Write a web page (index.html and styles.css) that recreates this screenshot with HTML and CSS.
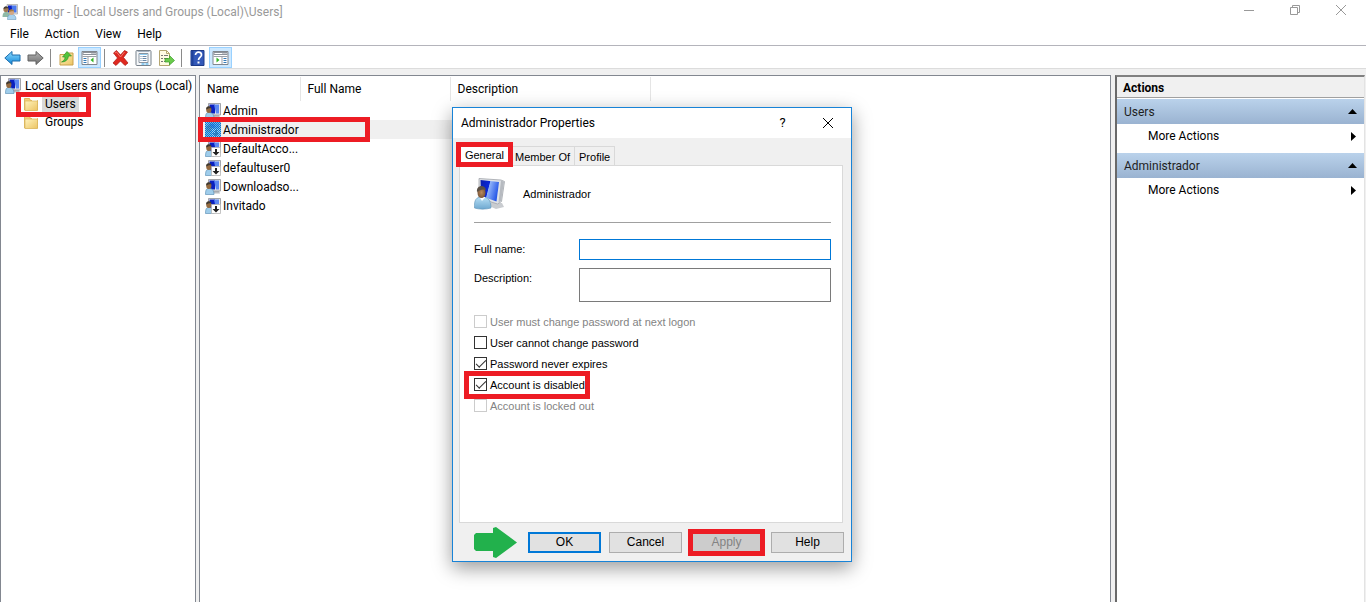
FILE: index.html
```html
<!DOCTYPE html>
<html lang="en">
<head>
<meta charset="utf-8">
<title>lusrmgr</title>
<link rel="stylesheet" href="styles.css">
</head>
<body>
<svg class="defs" aria-hidden="true">
  <defs>
    <linearGradient id="screen" x1="0" y1="0" x2="1" y2="0.3">
      <stop offset="0" stop-color="#0a1ea8"/><stop offset="0.48" stop-color="#0a28d8"/><stop offset="0.52" stop-color="#8fb2f8"/><stop offset="1" stop-color="#2a5ae8"/>
    </linearGradient>
    <linearGradient id="shirt" x1="0" y1="0" x2="0" y2="1">
      <stop offset="0" stop-color="#b8e0f6"/><stop offset="1" stop-color="#6ea8d0"/>
    </linearGradient>
    <radialGradient id="skin"><stop offset="0" stop-color="#b98a5c"/><stop offset="1" stop-color="#7d583a"/></radialGradient>
    <linearGradient id="paper" x1="0" y1="0" x2="1" y2="1">
      <stop offset="0" stop-color="#fff3bd"/><stop offset="1" stop-color="#ecc463"/>
    </linearGradient>
    <linearGradient id="blue" x1="0" y1="0" x2="0" y2="1">
      <stop offset="0" stop-color="#8fdcff"/><stop offset="1" stop-color="#0f86d8"/>
    </linearGradient>
    <linearGradient id="gray" x1="0" y1="0" x2="0" y2="1">
      <stop offset="0" stop-color="#b4b4b4"/><stop offset="1" stop-color="#6e6e6e"/>
    </linearGradient>
    <pattern id="dither" width="2" height="2" patternUnits="userSpaceOnUse">
      <path d="M0 0h1v1H0zM1 1h1v1H1z" fill="#0078d7"/>
    </pattern>
    <symbol id="user-large" viewBox="0 0 32 32">
      <path d="M17 24l11 1 2 4-8 2-7-3z" fill="#c9ccd0"/>
      <path d="M5 .5l22 1.500 3.500 1.500-3 20-4 2.500L5 20z" fill="#dfe2e6" stroke="#a1a5ab" stroke-width="0.800"/>
      <path d="M6.500 2l18.500 2-2.500 19.500L7 18z" fill="url(#screen)"/>
      <path d="M27 2.500l3 1.300-2.800 19-2.700 1.700z" fill="#b6bac0"/>
      <path d="M.5 30c-.5-8 1.500-11 7.500-11s9 3 9 11c-5 1.500-12 1.500-16.500 0z" fill="url(#shirt)" stroke="#5f93b8" stroke-width="0.600"/>
      <path d="M5.500 19l2.500 4 3.500-4z" fill="#fff"/>
      <ellipse cx="7.500" cy="14.500" rx="4" ry="5.500" fill="url(#skin)"/>
      <path d="M3 14c-1-7 8-8 9-2-4-1-6 0-9 2z" fill="#5a5046"/>
    </symbol>
    <symbol id="user" viewBox="0 0 16 16">
      <path d="M8 12h6l1 2.500H8z" fill="#b9bcc0"/>
      <path d="M3.500.5h12v11.500h-12z" fill="#e4e6e9" stroke="#8d9197" stroke-width="0.800"/>
      <path d="M4.500 1.500H10v9H4.500z" fill="#0a20c0"/>
      <path d="M9 1.500h5v9h-3z" fill="#5c88f2"/>
      <path d="M.5 15.500c0-5 1-6 3.500-6s5 1 5 6z" fill="#9fcdeb" stroke="#4f86ae" stroke-width="0.600"/>
      <ellipse cx="3.800" cy="6.800" rx="2.600" ry="3.200" fill="#94693f"/>
      <path d="M1.200 6.500C.8 2.500 6 2.500 6.500 5.500c-2-.5-3 0-5.300 1z" fill="#3d3832"/>
    </symbol>
    <symbol id="user-off" viewBox="0 0 16 16">
      <use href="#user" width="16" height="16"/>
      <path d="M6.500 6.500h9v9h-9z" fill="#fff" stroke="#b5b5b5" stroke-width="0.800"/>
      <path d="M10 8h2v3h2.500L11 14.500 7.500 11H10z" fill="#222"/>
    </symbol>
    <symbol id="user-picked" viewBox="0 0 16 16">
      <use href="#user-off" width="16" height="16" opacity="0.6"/>
      <path d="M0 0h16v16H0z" fill="#2f9ae8" opacity="0.45"/>
      <path d="M0 0h16v16H0z" fill="url(#dither)"/>
    </symbol>
    <symbol id="users" viewBox="0 0 16 16">
      <path d="M5 .5h10.500v9.500H5z" fill="#e0e0e0" stroke="#999" stroke-width="0.600"/>
      <path d="M6 1.500h4v7H6z" fill="#0a20c0"/><path d="M9.500 1.500h5v7h-4z" fill="#4a78ee"/>
      <path d="M.5 13c0-4 1.500-5 3.500-5s4 1 4 5z" fill="#8fb9a7"/>
      <circle cx="4" cy="5.500" r="2.600" fill="#a37a52"/><path d="M1.500 5c0-4 5-3.500 5-.5-2-.5-3 0-5 .5z" fill="#443c34"/>
      <path d="M5.500 15.500c0-4 1.500-5 4-5s4.500 1 4.500 5z" fill="#a9d2ee" stroke="#5b8cb0" stroke-width="0.500"/>
      <circle cx="9.500" cy="8.300" r="2.600" fill="#d4a884"/><path d="M7 8c0-4 5-3.500 5-.5-2-.5-3 0-5 .5z" fill="#a67b40"/>
    </symbol>
    <symbol id="folder" viewBox="0 0 16 16">
      <path d="M1.500 14V2.500h5l1 2h7V14z" fill="#f3d27b" stroke="#d6ab4c" stroke-width="0.800"/>
      <path d="M9 3h5v3H9z" fill="#fff"/>
      <path d="M2 5h12.500v9.500H2z" fill="url(#paper)" stroke="#dab45a" stroke-width="0.700"/>
    </symbol>
    <symbol id="back" viewBox="0 0 17 16">
      <path d="M.8 8L8 1.500V5h8v6H8v3.500z" fill="url(#blue)" stroke="#1c6cac" stroke-linejoin="round"/>
    </symbol>
    <symbol id="forward" viewBox="0 0 17 16">
      <path d="M16.200 8L9 1.500V5H1v6h8v3.500z" fill="url(#gray)" stroke="#626262" stroke-linejoin="round"/>
    </symbol>
    <symbol id="up" viewBox="0 0 16 16">
      <path d="M1.500 15V4.500h5L8 3h6.500v12z" fill="url(#paper)" stroke="#c9a04b"/>
      <path d="M3 12c2.500-1 3.500-3 3.500-5H4l4.500-5.500L13 6h-3c-.5 4-3 6-7 6z" fill="#52c43c" stroke="#2c8a24" stroke-width="0.600"/>
    </symbol>
    <symbol id="panel-left" viewBox="0 0 16 16">
      <path d="M.5 1.500h15v13H.5z" fill="#fff" stroke="#81868d"/>
      <path d="M1 2h14v3H1z" fill="#8c929a"/><path d="M2 3h8v1H2zM11 3h1v1h-1zM13 3h1v1h-1z" fill="#fff"/>
      <path d="M6 7h1v7H6zM1 6h14v1H1z" fill="#9da2a9"/>
      <path d="M2 8h3v1H2zM2 10h3v1H2zM2 12h3v1H2z" fill="#347ab8"/>
      <path d="M12 7.500v5L9 10z" fill="#35b526"/>
    </symbol>
    <symbol id="panel-right" viewBox="0 0 16 16">
      <path d="M.5 1.500h15v13H.5z" fill="#fff" stroke="#81868d"/>
      <path d="M1 2h14v3H1z" fill="#8c929a"/><path d="M2 3h8v1H2zM11 3h1v1h-1zM13 3h1v1h-1z" fill="#fff"/>
      <path d="M9 7h1v7H9zM1 6h14v1H1z" fill="#9da2a9"/>
      <path d="M11 8h3v1h-3zM11 10h3v1h-3zM11 12h3v1h-3z" fill="#347ab8"/>
      <path d="M4 7.500v5L7 10z" fill="#35b526"/>
    </symbol>
    <symbol id="delete" viewBox="0 0 16 16">
      <path d="M1 3l3-2.500 4 4.500 4-4.500L15 2l-4 5.500 4.500 5.500-3 2.500L8 11l-4.500 4.500L.5 13 5 8z" fill="#e0281f" stroke="#a81811" stroke-width="0.700"/>
      <path d="M2.500 3L4 2l4 5 4-5" fill="none" stroke="#f58a80" stroke-width="0.800"/>
    </symbol>
    <symbol id="properties" viewBox="0 0 16 16">
      <rect x="0.500" y="0.500" width="15" height="15" rx="1" fill="#f6f8fa" stroke="#77818b"/>
      <path d="M3.500 3.500h9v9h-9z" fill="#fff" stroke="#8994a0"/>
      <path d="M2 1h12v1H2z" fill="#a7b4c2"/>
      <path d="M5 6h1v1H5zM5 8h1v1H5zM5 10h1v1H5zM7 6h4v1H7zM7 8h4v1H7zM7 10h4v1H7z" fill="#6788aa"/>
      <path d="M4 4h8v1H4zM6 13h3v2H6zM10 13h3v2h-3z" fill="#8fcdf2"/>
    </symbol>
    <symbol id="export" viewBox="0 0 17 16">
      <path d="M1.500.5h7l3 3v12h-10z" fill="#fffbe4" stroke="#b5a671"/>
      <path d="M8.500.5v3h3" fill="none" stroke="#b5a671"/>
      <path d="M3 5h2v1H3zM6 5h4v1H6zM3 8h2v1H3zM6 8h4v1H6zM3 11h2v1H3zM6 11h2v1H6z" fill="#777"/>
      <path d="M7 8.500h4.500v-3l5 5-5 4.500v-3H7z" fill="#6acb4c" stroke="#3a9b2a" stroke-width="0.700"/>
    </symbol>
    <symbol id="help" viewBox="0 0 14 16">
      <path d="M.5.5h13v15H.5z" fill="#3358b8" stroke="#1e3a87"/><path d="M1 1h2v14H1z" fill="#21429a"/>
      <path d="M5 5c0-4 6-3.500 6 0 0 2-3 2.500-3 5" fill="none" stroke="#fff" stroke-width="1.700"/><path d="M7 11.500h2v2H7z" fill="#fff"/>
    </symbol>
  </defs>
</svg>

<div class="window">
  <header class="titlebar">
    <svg class="icon"><use href="#users"/></svg>
    <h1>lusrmgr - [Local Users and Groups (Local)\Users]</h1>
    <div class="captions">
      <button aria-label="Minimize"><svg viewBox="0 0 12 12"><path d="M1 6.500h10"/></svg></button>
      <button aria-label="Restore"><svg viewBox="0 0 12 12"><path d="M1.500 3.500h7v7h-7zM3.500 3V1.500h7v7H9"/></svg></button>
      <button aria-label="Close"><svg viewBox="0 0 12 12"><path d="M1 1l10 10M11 1L1 11"/></svg></button>
    </div>
  </header>
  <nav class="menubar">
    <button>File</button><button>Action</button><button>View</button><button>Help</button>
  </nav>
  <div class="toolbar">
    <button aria-label="Back"><svg><use href="#back"/></svg></button>
    <button aria-label="Forward"><svg><use href="#forward"/></svg></button>
    <span class="divider"></span>
    <button aria-label="Up one level"><svg><use href="#up"/></svg></button>
    <button class="on" aria-label="Console tree"><svg><use href="#panel-left"/></svg></button>
    <span class="divider"></span>
    <button aria-label="Delete"><svg><use href="#delete"/></svg></button>
    <button aria-label="Properties"><svg><use href="#properties"/></svg></button>
    <button aria-label="Export list"><svg><use href="#export"/></svg></button>
    <span class="divider"></span>
    <button aria-label="Help"><svg><use href="#help"/></svg></button>
    <button class="on" aria-label="Action pane"><svg><use href="#panel-right"/></svg></button>
  </div>

  <main class="panes">
    <nav class="pane tree">
      <a class="node" href="#root"><svg class="icon"><use href="#user"/></svg><span>Local Users and Groups (Local)</span></a>
      <a class="node child mark" href="#users-node"><svg class="icon"><use href="#folder"/></svg><span class="current">Users</span></a>
      <a class="node child" href="#groups-node"><svg class="icon"><use href="#folder"/></svg><span>Groups</span></a>
    </nav>
    <section class="pane list">
      <table>
        <colgroup><col class="c1"><col class="c2"><col class="c3"><col></colgroup>
        <thead><tr><th>Name</th><th>Full Name</th><th>Description</th><td></td></tr></thead>
        <tbody>
          <tr><td><div class="entry"><svg class="icon"><use href="#user"/></svg>Admin</div></td><td></td><td></td><td></td></tr>
          <tr class="selected"><td><div class="entry mark"><svg class="icon"><use href="#user-picked"/></svg>Administrador</div></td><td></td><td></td><td></td></tr>
          <tr><td><div class="entry"><svg class="icon"><use href="#user-off"/></svg>DefaultAcco...</div></td><td></td><td></td><td></td></tr>
          <tr><td><div class="entry"><svg class="icon"><use href="#user-off"/></svg>defaultuser0</div></td><td></td><td></td><td></td></tr>
          <tr><td><div class="entry"><svg class="icon"><use href="#user"/></svg>Downloadso...</div></td><td></td><td></td><td></td></tr>
          <tr><td><div class="entry"><svg class="icon"><use href="#user-off"/></svg>Invitado</div></td><td></td><td></td><td></td></tr>
        </tbody>
      </table>
    </section>
    <aside class="actions">
      <h2>Actions</h2>
      <button class="group">Users<svg viewBox="0 0 9 5"><path d="M0 5l4.500-5L9 5z"/></svg></button>
      <button class="more">More Actions<svg viewBox="0 0 5 9"><path d="M0 0l5 4.500L0 9z"/></svg></button>
      <button class="group">Administrador<svg viewBox="0 0 9 5"><path d="M0 5l4.500-5L9 5z"/></svg></button>
      <button class="more">More Actions<svg viewBox="0 0 5 9"><path d="M0 0l5 4.500L0 9z"/></svg></button>
    </aside>
  </main>
</div>

<form class="dialog" role="dialog" aria-labelledby="dialog-title">
  <header class="dialog-title">
    <h2 id="dialog-title">Administrador Properties</h2>
    <button type="button" class="ask" aria-label="Context help">?</button>
    <button type="button" aria-label="Close"><svg viewBox="0 0 12 12"><path d="M1 1l10 10M11 1L1 11"/></svg></button>
  </header>
  <div class="tabs" role="tablist">
    <button type="button" class="tab active mark" role="tab" aria-selected="true">General</button>
    <button type="button" class="tab" role="tab">Member Of</button>
    <button type="button" class="tab" role="tab">Profile</button>
  </div>
  <div class="sheet" role="tabpanel">
    <div class="identity"><svg><use href="#user-large"/></svg><span>Administrador</span></div>
    <div class="fields">
      <label for="full">Full name:</label><input id="full" class="focused" type="text">
      <label for="desc">Description:</label><textarea id="desc"></textarea>
    </div>
    <div class="options">
      <label class="off"><input type="checkbox" disabled>User must change password at next logon</label>
      <label><input type="checkbox">User cannot change password</label>
      <label><input type="checkbox" checked>Password never expires</label>
      <label class="mark"><input type="checkbox" checked>Account is disabled</label>
      <label class="off"><input type="checkbox" disabled>Account is locked out</label>
    </div>
  </div>
  <footer class="buttons">
    <svg class="pointer" viewBox="0 0 43 31"><path d="M2 6h17V1l3-1 21 15.500L22 31l-3-1v-6H2l-2-2V8z" fill="#22b14c"/></svg>
    <button type="button" class="default">OK</button>
    <button type="button">Cancel</button>
    <div class="mark"><button type="button" disabled>Apply</button></div>
    <button type="button">Help</button>
  </footer>
</form>
</body>
</html>
```

FILE: styles.css
```css
* { box-sizing: border-box; }

body {
  margin: 0;
  background: #f0f0f0;
  color: #000;
  font: 12px/18px Roboto, "Open Sans", sans-serif;
  overflow: hidden;
}

button {
  margin: 0;
  padding: 0;
  border: 0;
  background: none;
  color: inherit;
  font: inherit;
}

h1, h2 { margin: 0; font: inherit; }
svg { display: block; flex: none; }
.defs { position: absolute; width: 0; height: 0; }
.icon { width: 16px; height: 16px; }

/* Red highlight frames lie over the element they call out. */
.mark { position: relative; }
.mark::after {
  content: "";
  position: absolute;
  inset: -5px;
  border: 5px solid #ed1c24;
  pointer-events: none;
}

.window { display: flex; flex-direction: column; height: 100vh; }

.titlebar {
  display: flex;
  align-items: center;
  gap: 5px;
  height: 24px;
  padding-left: 2px;
  background: #fff;
  color: #999;
}
.captions { display: flex; margin-left: auto; margin-top: -4px; padding-right: 2px; }
.captions button { display: grid; place-items: center; width: 46px; height: 20px; }
.captions svg { width: 12px; height: 12px; fill: none; stroke: #999; }

.menubar {
  display: flex;
  gap: 16px;
  height: 22px;
  padding: 1px 10px 2px;
  background: #fff;
  border-bottom: 1px solid #b4b4bb;
}

.toolbar {
  display: flex;
  align-items: center;
  height: 23px;
  padding: 1px 0 0 1px;
  background: #fff;
  border-bottom: 1px solid #dcdcdc;
}
.toolbar button { display: grid; place-items: center; width: 23px; height: 21px; }
.toolbar svg { width: 17px; height: 16px; }
.toolbar .on { background: #cce8ff; border: 1px solid #99d1ff; }
.divider { width: 1px; height: 18px; margin: 0 4px 0 3px; background: #8a8a8a; }

.panes { display: flex; flex: 1; gap: 3px; padding: 6px 1px 0 0; min-height: 0; }
.pane { background: #fff; border: 1px solid #828790; border-bottom: 0; }
.tree { width: 196px; padding-top: 1px; }
.node { display: flex; align-items: center; gap: 4px; width: max-content; height: 18px; padding-left: 4px; color: inherit; text-decoration: none; }
.node .icon { margin-bottom: 1px; }
.child { margin-left: 18px; gap: 3px; }
.child span { padding: 0 3px; }
.current { background: #d9d9d9; }
.tree .mark::after { inset: -3px -12px -4px -3px; }

.list { flex: 1; min-width: 0; padding: 1px 0 0; }
table { width: 100%; border-collapse: collapse; table-layout: fixed; }
.c1 { width: 100px; }
.c2 { width: 150px; }
.c3 { width: 200px; }
th { height: 24px; padding: 0 0 0 7px; border-right: 1px solid #e5e5e5; text-align: left; font-weight: 400; }
tbody td { height: 19px; padding: 0; }
.entry { display: flex; align-items: center; gap: 2px; height: 19px; padding-left: 5px; }
.selected td:not(:last-child) { background: #f0f0f0; }
.list .mark::after { inset: -3px -70px -3px -2px; }

.actions {
  width: 250px;
  margin-left: 1px;
  background: #fff;
  border: 2px solid #696969;
  border-width: 2px 1px 0 2px;
  border-color: #808080 #e3e3e3 #808080 #696969;
}
.actions h2 { height: 21px; padding-left: 6px; margin-bottom: 1px; line-height: 22px; font-weight: 700; background: #f0f0f0; border-bottom: 1px solid #a0a0a0; }
.actions button { display: flex; align-items: center; justify-content: space-between; width: 100%; height: 25px; }
.actions .group { background: linear-gradient(#bad2eb, #9ab3d1); padding: 0 7px; color: #1e1e1e; }
.actions .more { height: 24px; padding: 0 8px 0 31px; margin-bottom: 5px; }
.actions .group svg { width: 9px; height: 5px; }
.actions .more svg { width: 5px; height: 9px; }

.dialog {
  position: absolute;
  left: 452px;
  top: 107px;
  width: 400px;
  background: #f0f0f0;
  border: 1px solid #1883d7;
  box-shadow: 0 6px 18px rgba(0, 0, 0, 0.4);
  font: 11px/14px "Liberation Sans", Arial, sans-serif;
}
.dialog-title { display: flex; align-items: center; height: 30px; padding-right: 1px; background: #fff; font: 12px/18px Roboto, "Open Sans", sans-serif; }
.dialog-title h2 { flex: 1; padding-left: 8px; }
.dialog-title button { display: grid; place-items: center; width: 45px; height: 30px; }
.dialog-title svg { width: 12px; height: 12px; fill: none; stroke: #000; }
.dialog-title .ask { font-size: 13px; }

.tabs { display: flex; align-items: flex-end; height: 27px; padding-left: 8px; }
.tab { height: 19px; padding: 1px 4px 0; border: 1px solid #d9d9d9; border-width: 1px 1px 0 0; }
.tab.active { width: 48px; height: 20px; margin-right: 2px; padding: 0 0 2px; background: #fff; z-index: 1; }
.tabs .mark::after { inset: -4px -5px -2px; }

.sheet { height: 358px; margin: 0 8px 0 6px; padding: 12px 11px 0 14px; background: #fff; border: 1px solid #d9d9d9; }
.identity { display: flex; gap: 17px; height: 45px; border-bottom: 1px solid #a0a0a0; line-height: 32px; }
.identity svg { width: 32px; height: 32px; }
.fields { display: grid; grid-template-columns: 105px 1fr; gap: 8px 0; margin-top: 16px; }
.fields label { padding-top: 3px; }
.fields input, .fields textarea { display: block; width: 100%; margin: 0; padding: 2px; border: 1px solid #7a7a7a; background: #fff; font: inherit; resize: none; outline: 0; border-radius: 0; }
.fields input { height: 21px; }
.fields textarea { height: 34px; }
.fields .focused { border-color: #0078d7; }

.options { display: flex; flex-direction: column; align-items: flex-start; margin-top: 9px; }
.options label { display: flex; align-items: center; gap: 3px; height: 21px; }
.options .off { color: #838383; }
.options input { appearance: none; display: grid; place-items: center; width: 13px; height: 13px; margin: 0; border: 1px solid #333; background: #fff; }
.options input:disabled { border-color: #ccc; }
.options input:checked::before { content: ""; width: 9px; height: 4px; margin-bottom: 3px; border: solid #333; border-width: 0 0 1px 1px; transform: rotate(-45deg); }
.options .mark::after { inset: -3px -5px -4px -10px; }

.buttons { display: flex; align-items: center; gap: 8px; height: 38px; padding: 0 7px 0 21px; }
.buttons button { width: 73px; height: 21px; background: #e1e1e1; border: 1px solid #adadad; font-size: 12px; }
.buttons .default { border: 2px solid #0078d7; }
.buttons button:disabled { display: block; background: #ccc; border-color: #bfbfbf; color: #838383; }
.buttons .mark::after { inset: -3px -2px; }
.pointer { width: 43px; height: 31px; margin-right: 3px; }
```
